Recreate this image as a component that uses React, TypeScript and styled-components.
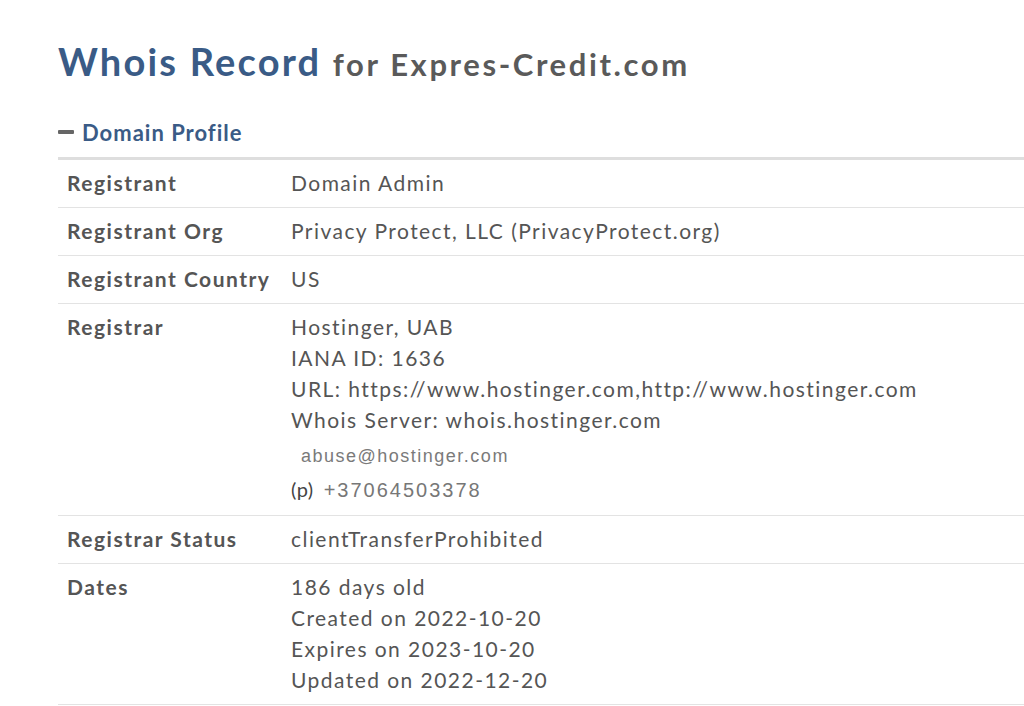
import React from "react";
import styled, { createGlobalStyle } from "styled-components";

const Global = createGlobalStyle`
  html, body { margin: 0; padding: 0; background: #fff; overflow: hidden; }
  body { font-family: Lato, "Open Sans", sans-serif; }
`;

const Page = styled.div`
  padding: 36px 0 0 58px;
  width: 1100px;
`;

const Title = styled.h1`
  margin: 0;
  font-family: Lato, sans-serif;
  font-weight: 700;
  font-size: 38px;
  line-height: 50px;
  color: #3a5b86;
  letter-spacing: 2.2px;
`;

const Sub = styled.span`
  font-size: 31px;
  color: #5a5a5a;
  margin-left: 0;
  letter-spacing: 2.6px;
`;

const SectionHead = styled.div`
  display: flex;
  align-items: center;
  gap: 8px;
  margin-top: 27px;
  height: 32px;
  color: #3a5b86;
  font-weight: 700;
  font-size: 22px;
  letter-spacing: 1px;
`;

const Minus = styled.span`
  display: inline-block;
  width: 16px;
  height: 4px;
  border-radius: 1px;
  background: #666;
`;

const Table = styled.div`
  margin-top: 9px;
  border-top: 3px solid #dedede;
  width: 1000px;
`;

const Row = styled.div`
  display: grid;
  grid-template-columns: 224px 1fr;
  border-bottom: 1px solid #e3e3e3;
  padding: 7px 0 9px 9px;
  font-size: 21px;
  line-height: 31px;
  color: #555;
`;

const Label = styled.div`
  font-weight: 700;
  letter-spacing: 1.5px;
`;

const Value = styled.div`
  display: flex;
  flex-direction: column;
  letter-spacing: 1.45px;
`;

const Email = styled.div`
  font-family: "Liberation Sans", Arial, sans-serif;
  font-size: 18px;
  color: #7a7a7a;
  margin: 9px 0 0 10px;
  letter-spacing: 1.5px;
  line-height: 24px;
`;

const Phone = styled.div`
  display: flex;
  align-items: baseline;
  gap: 10px;
  margin-top: 5px;
  letter-spacing: 0.5px;
  line-height: 32px;
`;

const PhoneTag = styled.span`
  font-size: 20px;
  color: #444;
`;

const PhoneNum = styled.span`
  font-family: "Liberation Sans", Arial, sans-serif;
  font-size: 20px;
  color: #777;
  letter-spacing: 2px;
`;

const rows: { label: string; lines: string[] }[] = [
  { label: "Registrant", lines: ["Domain Admin"] },
  { label: "Registrant Org", lines: ["Privacy Protect, LLC (PrivacyProtect.org)"] },
  { label: "Registrant Country", lines: ["US"] },
];

export default function App() {
  return (
    <Page>
      <Global />
      <Title>
        Whois Record <Sub>for Expres-Credit.com</Sub>
      </Title>
      <SectionHead>
        <Minus />
        Domain Profile
      </SectionHead>
      <Table>
        {rows.map((r) => (
          <Row key={r.label}>
            <Label>{r.label}</Label>
            <Value>
              {r.lines.map((l) => (
                <span key={l}>{l}</span>
              ))}
            </Value>
          </Row>
        ))}
        <Row>
          <Label>Registrar</Label>
          <Value>
            <span>Hostinger, UAB</span>
            <span>IANA ID: 1636</span>
            <span>URL: https://www.hostinger.com,http://www.hostinger.com</span>
            <span>Whois Server: whois.hostinger.com</span>
            <Email>abuse@hostinger.com</Email>
            <Phone>
              <PhoneTag>(p)</PhoneTag>
              <PhoneNum>+37064503378</PhoneNum>
            </Phone>
          </Value>
        </Row>
        <Row>
          <Label>Registrar Status</Label>
          <Value>
            <span>clientTransferProhibited</span>
          </Value>
        </Row>
        <Row>
          <Label>Dates</Label>
          <Value>
            <span>186 days old</span>
            <span>Created on 2022-10-20</span>
            <span>Expires on 2023-10-20</span>
            <span>Updated on 2022-12-20</span>
          </Value>
        </Row>
      </Table>
    </Page>
  );
}
